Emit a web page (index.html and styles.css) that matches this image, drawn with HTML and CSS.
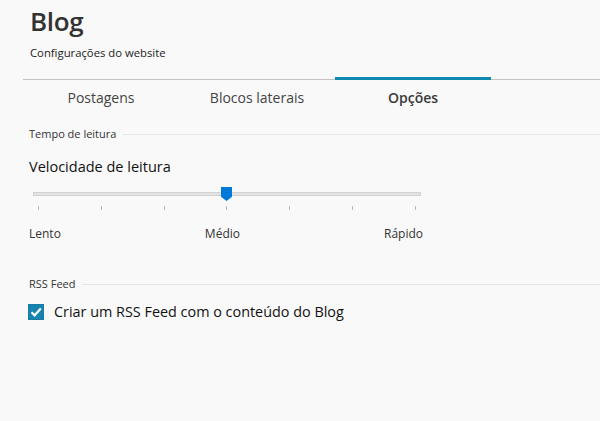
FILE: index.html
```html
<!DOCTYPE html>
<html lang="pt">
<head>
<meta charset="utf-8">
<link rel="stylesheet" href="styles.css">
</head>
<body>
<div class="page">
  <header class="head">
    <h1 class="title">Blog</h1>
    <p class="subtitle">Configurações do website</p>
  </header>
  <nav class="tabs">
    <div class="tab">Postagens</div>
    <div class="tab">Blocos laterais</div>
    <div class="tab active">Opções</div>
  </nav>
  <section class="group">
    <div class="legend"><span>Tempo de leitura</span><i class="rule"></i></div>
    <div class="label">Velocidade de leitura</div>
    <div class="slider">
      <div class="track"></div>
      <div class="thumb"></div>
      <div class="ticks">
        <i></i><i></i><i></i><i></i><i></i><i></i><i></i>
      </div>
    </div>
    <div class="scale">
      <span>Lento</span><span>Médio</span><span>Rápido</span>
    </div>
  </section>
  <section class="group rss">
    <div class="legend"><span>RSS Feed</span><i class="rule"></i></div>
    <label class="check">
      <span class="box"><svg width="12" height="12" viewBox="0 0 12 12"><path d="M1.5 6.2 L4.6 9.3 L10.8 2.6" fill="none" stroke="#fff" stroke-width="2.2"/></svg></span>
      <span>Criar um RSS Feed com o conteúdo do Blog</span>
    </label>
  </section>
</div>
</body>
</html>
```
FILE: styles.css
```css
html, body { margin: 0; padding: 0; }
body {
  background: #f9f9f9;
  width: 600px;
  height: 421px;
  overflow: hidden;
  font-family: "Open Sans", "Noto Sans", sans-serif;
  color: #222;
}
.page { padding-left: 23px; }
.head { padding-left: 7px; height: 79px; }
.title {
  margin: 0;
  padding-top: 3px;
  font-size: 26px;
  font-weight: 600;
  line-height: 36px;
  color: #333;
  letter-spacing: -0.3px;
}
.subtitle {
  margin: 6px 0 0;
  font-size: 11.3px;
  line-height: 16px;
  color: #222;
}
.tabs {
  display: flex;
  border-top: 1px solid #c4c4c4;
  height: 40px;
}
.tab {
  width: 156px;
  text-align: center;
  font-size: 14px;
  line-height: 36px;
  color: #444;
  position: relative;
}
.tab.active { font-weight: 600; color: #3a3a3a; }
.tab.active::before {
  content: "";
  position: absolute;
  left: 0; right: 0; top: -3px;
  height: 3px;
  background: #0e8ab0;
}
.group { padding-left: 6px; }
.legend {
  display: flex;
  align-items: center;
  gap: 7px;
  font-size: 11px;
  line-height: 16px;
  color: #333;
  margin-top: 6px;
}
.legend .rule { flex: 1; height: 1px; background: #e6e6e6; }
.label {
  margin-top: 15px;
  font-size: 14.5px;
  line-height: 20px;
  color: #111;
}
.slider {
  position: relative;
  width: 388px;
  margin-left: 4px;
  margin-top: 5px;
  height: 36px;
}
.track {
  position: absolute;
  left: 0; right: 0; top: 10px;
  height: 2px;
  background: #e2e2e2;
  border: 1px solid #d2d2d2;
}
.thumb {
  position: absolute;
  left: 188px; top: 5px;
  width: 11px; height: 14px;
  background: #0078d7;
  clip-path: polygon(0 0, 100% 0, 100% 70%, 50% 100%, 0 70%);
}
.ticks {
  position: absolute;
  left: 5px; right: 5px; top: 24px;
  display: flex;
  justify-content: space-between;
}
.ticks i { width: 1px; height: 4px; background: #b8b8b8; }
.scale {
  display: flex;
  justify-content: space-between;
  width: 394px;
  font-size: 12px;
  line-height: 16px;
  color: #333;
  margin-top: 8px;
}
.rss .legend { margin-top: 34px; }
.check {
  display: flex;
  align-items: center;
  gap: 10px;
  margin-top: 10px;
  font-size: 14.4px;
  color: #111;
}
.box {
  width: 14px; height: 14px;
  border: 1px solid #1a7aa2;
  background: #1585b0;
  display: flex; align-items: center; justify-content: center;
  margin-left: -1px;
}
```
